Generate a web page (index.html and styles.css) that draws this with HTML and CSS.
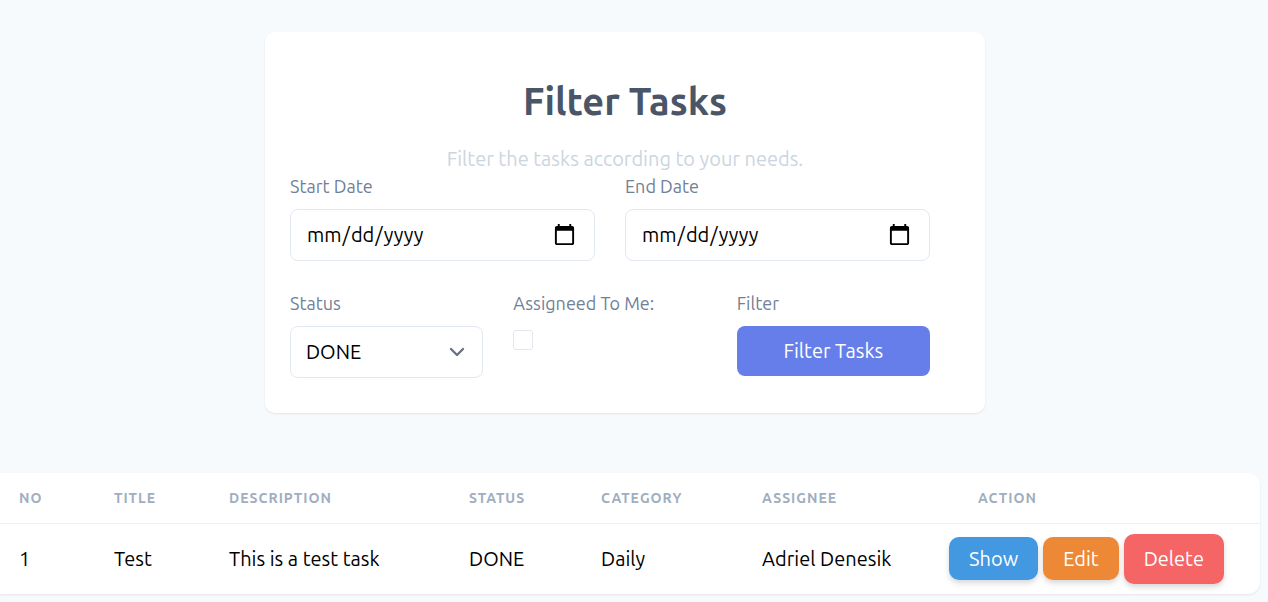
FILE: index.html
```html
<!DOCTYPE html>
<html lang="en">
<head>
<meta charset="utf-8">
<meta name="viewport" content="width=device-width, initial-scale=1">
<title>Filter Tasks</title>
<link rel="stylesheet" href="styles.css">
</head>
<body>
<main class="page">
  <section class="filter-wrap">
    <form class="card">
      <h1 class="title">Filter Tasks</h1>
      <p class="subtitle">Filter the tasks according to your needs.</p>
      <div class="fields two">
        <div class="field">
          <label class="label" for="start">Start Date</label>
          <input class="control date" id="start" type="date">
        </div>
        <div class="field">
          <label class="label" for="end">End Date</label>
          <input class="control date" id="end" type="date">
        </div>
      </div>
      <div class="fields three">
        <div class="field">
          <label class="label" for="status">Status</label>
          <div class="select-wrap">
            <select class="control select" id="status"><option>DONE</option></select>
            <svg class="chevron" viewBox="0 0 16 10" aria-hidden="true"><path d="M2 2l6 6 6-6"/></svg>
          </div>
        </div>
        <div class="field">
          <label class="label" for="mine">Assigneed To Me:</label>
          <input class="check" id="mine" type="checkbox">
        </div>
        <div class="field">
          <label class="label" for="submit">Filter</label>
          <button class="submit" id="submit" type="button">Filter Tasks</button>
        </div>
      </div>
    </form>
  </section>
  <section class="table-card">
    <table class="tasks">
      <colgroup>
        <col class="c-no"><col class="c-title"><col class="c-desc"><col class="c-status"><col class="c-cat"><col class="c-who"><col>
      </colgroup>
      <thead>
        <tr><th>No</th><th>Title</th><th>Description</th><th>Status</th><th>Category</th><th>Assignee</th><th class="action-head">Action</th></tr>
      </thead>
      <tbody>
        <tr>
          <td>1</td><td>Test</td><td>This is a test task</td><td>DONE</td><td>Daily</td><td>Adriel Denesik</td>
          <td class="action-cell">
            <div class="actions">
              <a class="btn show" href="#">Show</a>
              <a class="btn edit" href="#">Edit</a>
              <button class="btn delete" type="button">Delete</button>
            </div>
          </td>
        </tr>
      </tbody>
    </table>
  </section>
</main>
</body>
</html>
```
FILE: styles.css
```css
* { box-sizing: border-box; }
body {
  margin: 0;
  background: #f7fafc;
  color: #000;
  font-family: Ubuntu, "Noto Sans", sans-serif;
  font-size: 20px;
  line-height: 30px;
}
.page { padding: 32px 8px 8px 0; }
.filter-wrap { padding-right: 10px; }
.card {
  max-width: 720px;
  margin: 0 auto 60px;
  padding: 39px 55px 35px 25px;
  background: #fff;
  border-radius: 10px;
  box-shadow: 0 1px 3px rgba(0, 0, 0, .05), 0 1px 2px rgba(0, 0, 0, .04);
}
.title {
  margin: 0 -30px 13px 0;
  color: #4a5568;
  font-size: 38px;
  line-height: 60px;
  font-weight: 700;
  text-align: center;
}
.subtitle {
  margin: 0 -30px 0 0;
  color: #cbd5e0;
  text-align: center;
}
.fields { display: grid; column-gap: 30px; }
.two { grid-template-columns: repeat(2, 1fr); margin-bottom: 30px; }
.three { grid-template-columns: repeat(3, 1fr); }
.label {
  display: block;
  margin-bottom: 10px;
  color: #718096;
  font-size: 18px;
  line-height: 25px;
  white-space: nowrap;
}
.control {
  display: block;
  width: 100%;
  height: 52px;
  padding: 10px 15px;
  border: 1px solid #e2e8f0;
  border-radius: 8px;
  background: #fff;
  color: #000;
  font: inherit;
}
.date { padding-right: 17px; }
.date::-webkit-calendar-picker-indicator { width: 25px; height: 25px; padding: 0; background-size: contain; }
.select-wrap { position: relative; }
.select { appearance: none; padding-right: 40px; }
.chevron {
  position: absolute;
  right: 18px;
  top: 21px;
  width: 16px;
  height: 10px;
  fill: none;
  stroke: #6b7280;
  stroke-width: 2.4;
  stroke-linecap: round;
  stroke-linejoin: round;
  pointer-events: none;
}
.check {
  appearance: none;
  display: block;
  width: 20px;
  height: 20px;
  margin: 14px 0 0;
  border: 1px solid #e2e8f0;
  border-radius: 3px;
  background: #fff;
}
.submit {
  display: block;
  width: 100%;
  height: 50px;
  padding: 0;
  border: 0;
  border-radius: 8px;
  background: #667eea;
  color: #fff;
  font: inherit;
}
.table-card {
  background: #fff;
  border-radius: 0 12px 12px 0;
  box-shadow: 0 1px 3px rgba(0, 0, 0, .05), 0 1px 2px rgba(0, 0, 0, .04);
}
.tasks { width: 100%; table-layout: fixed; border-collapse: separate; border-spacing: 0; }
.c-no { width: 7.54%; }
.c-title { width: 9.13%; }
.c-desc { width: 19.05%; }
.c-status { width: 10.48%; }
.c-cat { width: 12.78%; }
.c-who { width: 14.84%; }
.tasks th {
  padding: 10px 19px;
  border-bottom: 1px solid #edf2f7;
  color: #a0aec0;
  font-size: 14px;
  font-weight: 600;
  letter-spacing: 1px;
  text-align: left;
  text-transform: uppercase;
}
.tasks td { padding: 10px 19px; white-space: nowrap; }
.tasks .action-head { padding-left: 48px; }
.actions { display: flex; align-items: baseline; gap: 5px; }
.btn {
  padding: 7px 20px 6px;
  border: 0;
  border-radius: 10px;
  box-shadow: 0 4px 6px rgba(0, 0, 0, .1), 0 2px 4px rgba(0, 0, 0, .06);
  color: #fff;
  font: inherit;
  text-decoration: none;
}
.show { background: #4299e1; }
.edit { background: #ed8936; }
.delete { padding: 10px 20px; background: #f56565; }
```
